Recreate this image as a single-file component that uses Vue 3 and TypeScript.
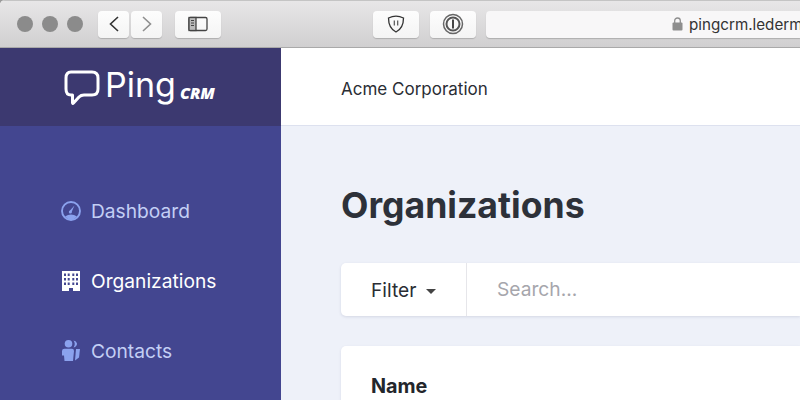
<script setup lang="ts">
const navItems = [
  { label: 'Dashboard', icon: 'dash', active: false },
  { label: 'Organizations', icon: 'org', active: true },
  { label: 'Contacts', icon: 'contacts', active: false },
]
</script>

<template>
  <div class="window">
    <div class="toolbar">
      <div class="lights"><i></i><i></i><i></i></div>
      <div class="nav-btns">
        <button class="tb-btn arrow">
          <svg width="14" height="18" viewBox="0 0 14 18"><path d="M11 2 3.5 9 11 16" fill="none" stroke="#333" stroke-width="1.6" /></svg>
        </button>
        <button class="tb-btn arrow">
          <svg width="14" height="18" viewBox="0 0 14 18"><path d="M3 2 10.500 9 3 16" fill="none" stroke="#8f8f8f" stroke-width="1.600" /></svg>
        </button>
      </div>
      <button class="tb-btn sidebar-btn">
        <svg width="20" height="16" viewBox="0 0 20 16">
          <rect x="1" y="1.500" width="18" height="13" rx="1.500" fill="none" stroke="#444" stroke-width="1.300" />
          <rect x="1" y="1.500" width="7" height="13" fill="#bbb" stroke="#444" stroke-width="1.300" />
          <path d="M3 4.500h3M3 7h3M3 9.500h3" stroke="#444" stroke-width="1" />
        </svg>
      </button>
      <button class="tb-btn ext-btn first-ext">
        <svg width="20" height="20" viewBox="0 0 20 20">
          <path d="M2.500 4C7 1.800 13 1.800 17.500 4 17.500 11 15 15.500 10 18 5 15.500 2.500 11 2.500 4Z" fill="none" stroke="#333" stroke-width="1.300" />
          <path d="M8.300 6.500v5M11.700 6.500v5" stroke="#555" stroke-width="1.200" />
        </svg>
      </button>
      <button class="tb-btn ext-btn">
        <svg width="22" height="22" viewBox="0 0 22 22">
          <circle cx="11" cy="11" r="9.500" fill="none" stroke="#666" stroke-width="1.500" />
          <circle cx="11" cy="11" r="6.500" fill="none" stroke="#555" stroke-width="2" />
          <rect x="10" y="6.500" width="2" height="9" fill="#444" />
        </svg>
      </button>
      <div class="address">
        <svg class="lock" width="11" height="14" viewBox="0 0 11 14">
          <rect x="0.500" y="5.500" width="10" height="8" rx="1" fill="#8e8e8e" />
          <path d="M2.700 6V3.800a2.800 2.800 0 0 1 5.600 0V6" fill="none" stroke="#8e8e8e" stroke-width="1.300" />
        </svg>
        <span>pingcrm.ledermann.dev</span>
      </div>
    </div>

    <div class="app">
      <aside class="side">
        <div class="brand">
          <svg class="bubble" width="36" height="36" viewBox="0 0 36 36">
            <path d="M7 2H28Q34 2 34 8V19Q34 25 28 25H20Q17 25 15 27L9.500 33Q8.500 34 8.500 32.500V25H7Q2 25 2 19V8Q2 2 7 2Z" fill="none" stroke="#fff" stroke-width="3" stroke-linejoin="round" />
          </svg>
          <span class="ping">Ping</span>
          <span class="crm">CRM</span>
        </div>
        <nav class="nav">
          <a v-for="item in navItems" :key="item.label" class="nav-item" :class="{ active: item.active }">
            <svg v-if="item.icon === 'dash'" class="nav-icon" viewBox="0 0 20 20">
              <circle cx="11" cy="10" r="9" fill="none" stroke="#8ba2ee" stroke-width="1.900" />
              <path d="M5 15.500Q11 11.500 17 15.500 14.500 18.500 11 18.500 7.500 18.500 5 15.500Z" fill="#8ba2ee" />
              <path d="M9.300 10.200 14.500 4.500 11.300 11.800Z" fill="#8ba2ee" />
              <circle cx="10.300" cy="11" r="1.500" fill="#8ba2ee" />
            </svg>
            <svg v-else-if="item.icon === 'org'" class="nav-icon" viewBox="0 0 20 20">
              <path fill-rule="evenodd" fill="#fff" d="M2 0H20V20H13V17H9V20H2ZM4 2.500V5H6V2.500ZM7.700 2.500V5H9.700V2.500ZM12.300 2.500V5H14.300V2.500ZM16 2.500V5H18V2.500ZM4 7V9.500H6V7ZM7.700 7V9.500H9.700V7ZM12.300 7V9.500H14.300V7ZM16 7V9.500H18V7ZM4 11.500V14H6V11.500ZM7.700 11.500V14H9.700V11.500ZM12.300 11.500V14H14.300V11.500ZM16 11.500V14H18V11.500Z" />
            </svg>
            <svg v-else class="nav-icon" viewBox="0 0 20 20">
              <circle cx="8.500" cy="2.800" r="3.800" fill="#8ba2ee" />
              <path d="M13.500 -0.500Q16 3 13.500 6.500 17 5.500 17 2.500 16.500 0 13.500 -0.500Z" fill="#8ba2ee" />
              <path d="M2 10Q2 7.800 4.500 7.800H12Q14 7.800 14 10L13 20H4.500L4 14.500H2Z" fill="#8ba2ee" />
              <path d="M16 8H20L19 16.500 15 19.500Z" fill="#8ba2ee" />
            </svg>
            <span>{{ item.label }}</span>
          </a>
        </nav>
      </aside>
      <main class="main">
        <header class="top"><span>Acme Corporation</span></header>
        <section class="content">
          <h1>Organizations</h1>
          <div class="search">
            <div class="filter">Filter <b class="caret"></b></div>
            <div class="placeholder">Search...</div>
          </div>
          <div class="table"><strong>Name</strong></div>
        </section>
      </main>
    </div>
  </div>
</template>

<style>
html, body { margin: 0; overflow: hidden; background: #9a9a9a; }
</style>

<style scoped>
* { box-sizing: border-box; }
.window {
  width: 800px; height: 400px; overflow: hidden; display: flex; flex-direction: column;
  font-family: Inter, "Liberation Sans", sans-serif; background: #fff; border-top-left-radius: 5px;
}
.toolbar {
  height: 48px; flex: none; display: flex; align-items: center; padding: 0 0 0 17px;
  background: linear-gradient(#e7e6e7, #d0cfd0); border-top: 1px solid #c4c4c4; border-bottom: 1px solid #a9a9a9;
}
.lights { display: flex; gap: 9px; width: 81px; }
.lights i { width: 16px; height: 16px; border-radius: 50%; background: #8b8b8b; display: block; }
.nav-btns { display: flex; gap: 2px; margin-right: 13px; }
.tb-btn {
  height: 27px; padding: 0; border: 0; border-radius: 4px; background: linear-gradient(#fdfdfd, #f4f4f4);
  box-shadow: 0 1px 1px rgba(0,0,0,.18); display: flex; align-items: center; justify-content: center;
}
.arrow { width: 31px; }
.sidebar-btn { width: 46px; }
.ext-btn { width: 46px; margin-right: 10px; }
.first-ext { margin-left: 152px; margin-right: 11px; }
.address {
  flex: 1; height: 27px; border-radius: 4px 0 0 4px; background: #f8f7f8;
  box-shadow: 0 1px 1px rgba(0,0,0,.18); display: flex; align-items: center; padding-left: 186px;
  font-size: 15.200px; color: #333; white-space: nowrap; gap: 6px; overflow: hidden;
}
.lock { flex: none; }
.app { flex: 1; display: flex; min-height: 0; }
.side { width: 281px; flex: none; background: #434690; display: flex; flex-direction: column; }
.brand {
  height: 78px; flex: none; background: #3c3970; display: flex; align-items: center; color: #fff; padding-left: 64px;
}
.bubble { flex: none; margin-right: 5px; margin-top: 2px; }
.ping { font-size: 34px; font-weight: 400; line-height: 1; margin-top: -4px; }
.crm { font-family: "Open Sans", sans-serif; font-size: 16px; font-weight: 800; font-style: italic; margin-left: 4px; margin-top: 11px; }
.nav { padding: 70px 0 0 60px; display: flex; flex-direction: column; gap: 40px; }
.nav-item { display: flex; align-items: center; gap: 11px; height: 30px; font-size: 19.200px; color: #c3cff5; white-space: nowrap; }
.nav-item.active { color: #fff; }
.nav-icon { width: 20px; height: 20px; flex: none; overflow: visible; }
.main { flex: 1; display: flex; flex-direction: column; min-width: 0; }
.top { height: 78px; flex: none; background: #fff; border-bottom: 1px solid #dde1ef; display: flex; align-items: center; padding: 4px 0 0 60px; font-size: 17px; color: #2a2d34; }
.content { flex: 1; background: #eef1f9; padding: 56px 0 0 60px; }
h1 { margin: 0; font-size: 35.600px; line-height: 48px; font-weight: 700; color: #2d3139; }
.search { margin-top: 33px; height: 53px; background: #fff; border-radius: 5px 0 0 5px; box-shadow: 0 1px 3px rgba(40,50,90,.13); display: flex; align-items: center; }
.filter { width: 126px; height: 100%; border-right: 1px solid #e6e6ea; padding-left: 30px; display: flex; align-items: center; font-size: 19.200px; color: #2a2d34; }
.caret { margin-left: 10px; margin-top: 3px; border: 5px solid transparent; border-top-color: #444; border-bottom: 0; border-left-width: 5.500px; border-right-width: 5.500px; }
.placeholder { padding-left: 30px; font-size: 19.200px; color: #a6a6ac; margin-top: -2px; }
.table { margin-top: 30px; height: 100px; background: #fff; border-radius: 5px 0 0 5px; box-shadow: 0 1px 3px rgba(40,50,90,.1); padding: 28px 0 0 30px; font-size: 19.800px; color: #23262c; }
.table strong { font-weight: 700; }
</style>
